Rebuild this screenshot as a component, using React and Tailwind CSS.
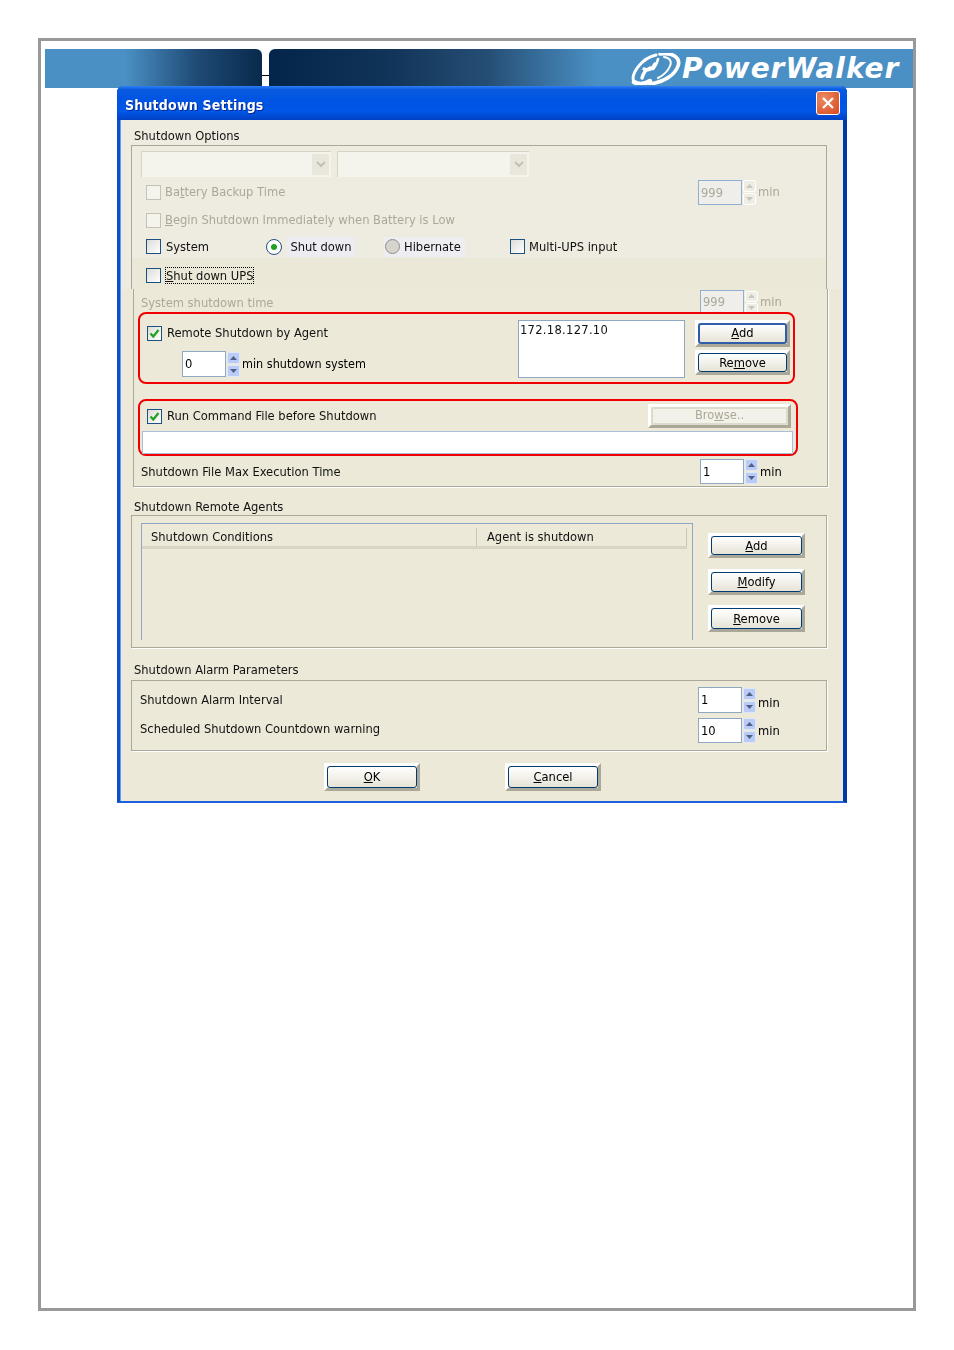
import React from 'react';

const Check = ({ on, off, className = '' }) => (
  <span className={`flex h-[15px] w-[15px] shrink-0 items-center justify-center border ${off ? 'border-[#c4c2b4] bg-[#f4f3ec]' : 'border-[#1c5180] bg-gradient-to-br from-[#dcdcd7] to-white'} ${className}`}>
    {on && (
      <svg width="11" height="11" viewBox="0 0 11 11">
        <path d="M1.5 5.5 L4.3 8.5 L9.5 2" fill="none" stroke="#21a121" strokeWidth="2.2" />
      </svg>
    )}
  </span>
);

const Arrow = ({ up, off }) => (
  <svg width="7" height="4" viewBox="0 0 7 4">
    <path d={up ? 'M3.5 0 L7 4 H0 Z' : 'M0 0 H7 L3.5 4 Z'} fill={off ? '#c9c7ba' : '#4d6185'} />
  </svg>
);

// number box with the little up/down buttons and "min" after it
const Spin = ({ value, off, unit, unitClass = '', h = 'h-[25px]', btn = 'h-[12px]' }) => (
  <div className="flex shrink-0 items-center">
    <div className={`flex w-[44px] items-center border pl-[2px] ${h} ${off ? 'border-[#8fb0cf] bg-[#efeeea] text-[#aca899]' : 'border-[#8fa9c4] bg-white text-black'}`}>
      {value}
    </div>
    <div className="ml-[1px] flex w-[13px] flex-col gap-[1px]">
      <div className={`flex items-center justify-center rounded-[2px] border ${btn} ${off ? 'border-white bg-[#efeee6]' : 'border-[#dfe7fb] bg-[#b9cbf6]'}`}>
        <Arrow up off={off} />
      </div>
      <div className={`flex items-center justify-center rounded-[2px] border ${btn} ${off ? 'border-white bg-[#efeee6]' : 'border-[#dfe7fb] bg-[#b9cbf6]'}`}>
        <Arrow off={off} />
      </div>
    </div>
    {unit && <span className={`ml-[2px] ${off ? 'text-[#aca899]' : 'text-black'} ${unitClass}`}>{unit}</span>}
  </div>
);

const XpButton = ({ children, w, h, off, focus, textClass = '' }) => (
  <div className={`box-border border-[3px] border-t-white border-l-white border-r-[#aca899] border-b-[#aca899] ${w} ${h}`}>
    <div className={`flex h-full w-full items-center justify-center rounded-[3px] ${off ? 'border-2 border-[#dedbcc] bg-[#f3f2ea] text-[#aca899]' : focus ? 'border-2 border-[#2f5da8] bg-gradient-to-b from-white to-[#e6e3d6] text-black' : 'border border-[#003c74] bg-gradient-to-b from-white to-[#e6e3d6] text-black'}`}>
      <span className={textClass}>{children}</span>
    </div>
  </div>
);

const Combo = ({ w }) => (
  <div className={`flex h-[26px] justify-end border-t border-l border-[#d6d3c3] bg-[#f5f4ec] p-[1px] ${w}`}>
    <div className="flex w-[19px] items-center justify-center rounded-[2px] border border-[#f4f3ee] bg-[#e9e7dc]">
      <svg width="10" height="7" viewBox="0 0 10 7">
        <path d="M1 1 L5 5 L9 1" fill="none" stroke="#c4c2b4" strokeWidth="2" />
      </svg>
    </div>
  </div>
);

const Logo = () => (
  <svg width="50" height="32" viewBox="0 0 50 32" className="shrink-0">
    <g fill="none" stroke="white" strokeLinecap="round">
      <path d="M3 29 C-1 21 11 5 25 2" strokeWidth="3" />
      <path d="M29 1 C42 -1 50 5 47 13 C44 22 33 29 19 31" strokeWidth="3.6" />
      <path d="M33 4 C39 5 41 8 39 13 C37 18 33 22 27 25" strokeWidth="2" />
      <path d="M3 29 C8 32 14 31 19 28" strokeWidth="4.4" />
      <path d="M13 16 C17 18 22 16 24 11 M11 25 C12 21 14 17 19 15" strokeWidth="3.4" />
      <path d="M27 6 C26 10 24 14 22 16" strokeWidth="2.6" />
    </g>
  </svg>
);

export default function App() {
  return (
    <div className="h-[1350px] w-[954px] bg-white pl-[38px] pt-[38px] font-['DejaVu_Sans',sans-serif] text-[12.8px] leading-[18px] text-[#111] [font-stretch:condensed]">
      <div className="box-border h-[1273px] w-[878px] border-[3px] border-[#999999] pl-[4px] pt-[8px]">
        {/* banner */}
        <div className="flex h-[39px] w-[868px] items-stretch">
          <div className="w-[217px] rounded-tr-[6px] bg-[linear-gradient(90deg,#4a90c4_0%,#4a90c4_37%,#1f4a75_70%,#082a4c_100%)]" />
          <div className="w-[7px] pt-[26px]">
            <div className="h-[1px] bg-black" />
          </div>
          <div className="flex w-[644px] items-center rounded-tl-[6px] bg-[linear-gradient(90deg,#04254a_0%,#103358_18%,#264e75_34%,#4a90c4_51%,#4a90c4_100%)] pl-[362px]">
            <Logo />
            <span className="ml-[1px] inline-block font-['DejaVu_Sans',sans-serif] text-[28px] font-bold italic leading-[30px] tracking-[1px] text-white [font-stretch:normal]">PowerWalker</span>
          </div>
        </div>

        {/* dialog */}
        <div className="relative ml-[72px] mt-[-2px] box-border flex h-[717px] w-[730px] flex-col rounded-t-[6px] border-b-2 border-l-[3px] border-r-4 border-b-[#1d5fdc] border-l-[#0a4fd0] border-r-[#0038a8] blur-[0.4px]">
          <div className="ml-[-3px] mr-[-4px] flex h-[34px] shrink-0 items-center justify-between rounded-t-[6px] bg-[linear-gradient(180deg,#2f80f5_0%,#0a5be0_10%,#0054e3_40%,#0056e6_75%,#0040c4_100%)] pl-[8px] pr-[7px]">
            <span className="mt-[3px] text-[14px] font-bold tracking-[0.2px] text-white [text-shadow:1px_1px_0_#0a2a8c]">Shutdown Settings</span>
            <div className="flex h-[24px] w-[24px] items-center justify-center rounded-[3px] border border-white bg-[radial-gradient(circle_at_30%_30%,#ec8a62,#d8491f)]">
              <svg width="14" height="14" viewBox="0 0 14 14">
                <path d="M2 2 L12 12 M12 2 L2 12" stroke="white" strokeWidth="2.2" />
              </svg>
            </div>
          </div>

          <div className="flex-1 border-l border-[#6a9be8] bg-[#ece9d9]">
            <div className="bg-[#eeebe0]">
              <div className="h-[25px] pl-[13px] pt-[7px]">Shutdown Options</div>
              <div className="ml-[10px] box-border h-[144px] w-[696px] border-x border-t border-[#aca899]">
                <div className="mt-[5px] flex gap-[6px] pl-[9px]">
                  <Combo w="w-[190px]" />
                  <Combo w="w-[192px]" />
                </div>
                <div className="mt-[3px] flex h-[25px] items-center pl-[14px] text-[#aca899]">
                  <div className="flex w-[552px] items-center">
                    <Check off />
                    <span className="ml-[4px] mt-[-2px]">Ba<u>t</u>tery Backup Time</span>
                  </div>
                  <Spin value="999" off unit="min" unitClass="mt-[-2px]" />
                </div>
                <div className="flex h-[30px] items-center pl-[14px] text-[#aca899]">
                  <Check off />
                  <span className="ml-[4px]"><u>B</u>egin Shutdown Immediately when Battery is Low</span>
                </div>
                <div className="flex h-[23px] items-center pl-[14px]">
                  <Check />
                  <span className="ml-[5px] w-[100px]">System</span>
                  <span className="flex h-[16px] w-[16px] items-center justify-center rounded-full border border-[#1c5180] bg-white">
                    <span className="h-[6px] w-[6px] rounded-full bg-[#21a121]" />
                  </span>
                  <span className="ml-[5px] flex h-[20px] w-[68px] items-center justify-center bg-[#edecf3]">Shut down</span>
                  <span className="ml-[29px] flex h-[20px] w-[81px] items-center bg-[#eeeef2]">
                    <span className="ml-[1px] h-[15px] w-[15px] rounded-full border border-[#8f8e88] bg-[#d6d4cc]" />
                    <span className="ml-[4px]">Hibernate</span>
                  </span>
                  <Check className="ml-[45px]" />
                  <span className="ml-[4px]">Multi-UPS input</span>
                </div>
                <div className="flex h-[31px] items-center bg-[#ebe8d7] pl-[14px] pt-[4px]">
                  <Check />
                  <span className="ml-[4px] border border-dotted border-black leading-[15px]"><u>S</u>hut down UPS</span>
                </div>
              </div>
            </div>

            <div className="ml-[12px] box-border h-[198px] w-[695px] border-x border-b border-[#aca899] shadow-[1px_1px_0_#fff]">
              <div className="flex h-[23px] items-start pl-[7px] text-[#aca899]">
                <span className="mt-[5px] w-[559px]">System shutdown time</span>
                <div className="mt-[1px]">
                  <Spin value="999" off unit="min" h="h-[24px]" btn="h-[11px]" />
                </div>
              </div>

              <div className="relative ml-[4px] box-border flex h-[72px] w-[657px] rounded-[8px] border-2 border-[#f00000]">
                <div className="w-[378px] pl-[7px] pt-[12px]">
                  <div className="flex h-[15px] items-center">
                    <Check on />
                    <span className="ml-[5px] mt-[-1px]">Remote Shutdown by Agent</span>
                  </div>
                  <div className="ml-[35px] mt-[10px] text-black">
                    <Spin value="0" unit="min shutdown system" unitClass="!ml-[2px] text-[12.5px] text-[#111]" h="h-[26px]" />
                  </div>
                </div>
                <div className="mt-[6px] box-border h-[58px] w-[167px] border border-[#8fa9c4] bg-white pl-[1px] tracking-[0.3px]">172.18.127.10</div>
                <div className="ml-[10px] mt-[6px] flex w-[95px] flex-col gap-[3px]">
                  <XpButton w="w-[95px]" h="h-[27px]" focus textClass="mt-[-1px]"><u>A</u>dd</XpButton>
                  <XpButton w="w-[95px]" h="h-[25px]">Re<u>m</u>ove</XpButton>
                </div>
              </div>

              <div className="relative ml-[4px] mt-[15px] box-border h-[57px] w-[660px] rounded-[8px] border-2 border-[#f00000]">
                <div className="flex h-[30px] items-center pl-[7px]">
                  <div className="flex w-[501px] items-center">
                    <Check on />
                    <span className="ml-[5px] mt-[-1px]">Run Command File before Shutdown</span>
                  </div>
                  <XpButton w="w-[143px]" h="h-[24px]" off textClass="mt-[-3px]">Bro<u>w</u>se..</XpButton>
                </div>
                <div className="ml-[2px] box-border h-[23px] w-[651px] border border-[#a9c0d8] bg-white" />
              </div>

              <div className="flex h-[30px] items-center pl-[7px] pt-[1px]">
                <span className="w-[559px]">Shutdown File Max Execution Time</span>
                <Spin value="1" unit="min" />
              </div>
            </div>

            <div className="h-[28px] pl-[13px] pt-[11px]">Shutdown Remote Agents</div>
            <div className="ml-[10px] box-border flex h-[133px] w-[696px] border border-[#aca899] shadow-[1px_1px_0_#fff]">
              <div className="ml-[9px] mt-[7px] box-border h-[117px] w-[552px] border-x border-t border-[#8fa9c4]">
                <div className="flex h-[25px] w-[545px] items-center border-b-[3px] border-[#d8d5c3] pt-[3px]">
                  <span className="w-[334px] pl-[9px]">Shutdown Conditions</span>
                  <span className="h-[18px] w-[1px] bg-[#c9c6b5]" />
                  <span className="flex-1 pl-[10px]">Agent is shutdown</span>
                  <span className="h-[18px] w-[1px] bg-[#c9c6b5]" />
                </div>
              </div>
              <div className="ml-[15px] mt-[17px] flex w-[97px] flex-col">
                <XpButton w="w-[97px]" h="h-[25px]"><u>A</u>dd</XpButton>
                <div className="mt-[11px]"><XpButton w="w-[97px]" h="h-[26px]"><u>M</u>odify</XpButton></div>
                <div className="mt-[10px]"><XpButton w="w-[97px]" h="h-[27px]"><u>R</u>emove</XpButton></div>
              </div>
            </div>

            <div className="h-[32px] pl-[13px] pt-[13px]">Shutdown Alarm Parameters</div>
            <div className="ml-[10px] box-border h-[71px] w-[696px] border border-[#aca899] pl-[8px] shadow-[1px_1px_0_#fff]">
              <div className="mt-[6px] flex h-[26px] items-center">
                <span className="w-[558px]">Shutdown Alarm Interval</span>
                <Spin value="1" unit="min" unitClass="mt-[6px]" h="h-[26px]" />
              </div>
              <div className="mt-[5px] flex h-[25px] items-center">
                <span className="mt-[-3px] w-[558px]">Scheduled Shutdown Countdown warning</span>
                <Spin value="10" unit="min" unitClass="mt-[1px]" />
              </div>
            </div>

            <div className="ml-[203px] mt-[12px] flex gap-[85px]">
              <XpButton w="w-[96px]" h="h-[28px]" textClass="mt-[-1px]"><u>O</u>K</XpButton>
              <XpButton w="w-[96px]" h="h-[28px]" textClass="mt-[-1px]"><u>C</u>ancel</XpButton>
            </div>
          </div>
        </div>
      </div>
    </div>
  );
}
